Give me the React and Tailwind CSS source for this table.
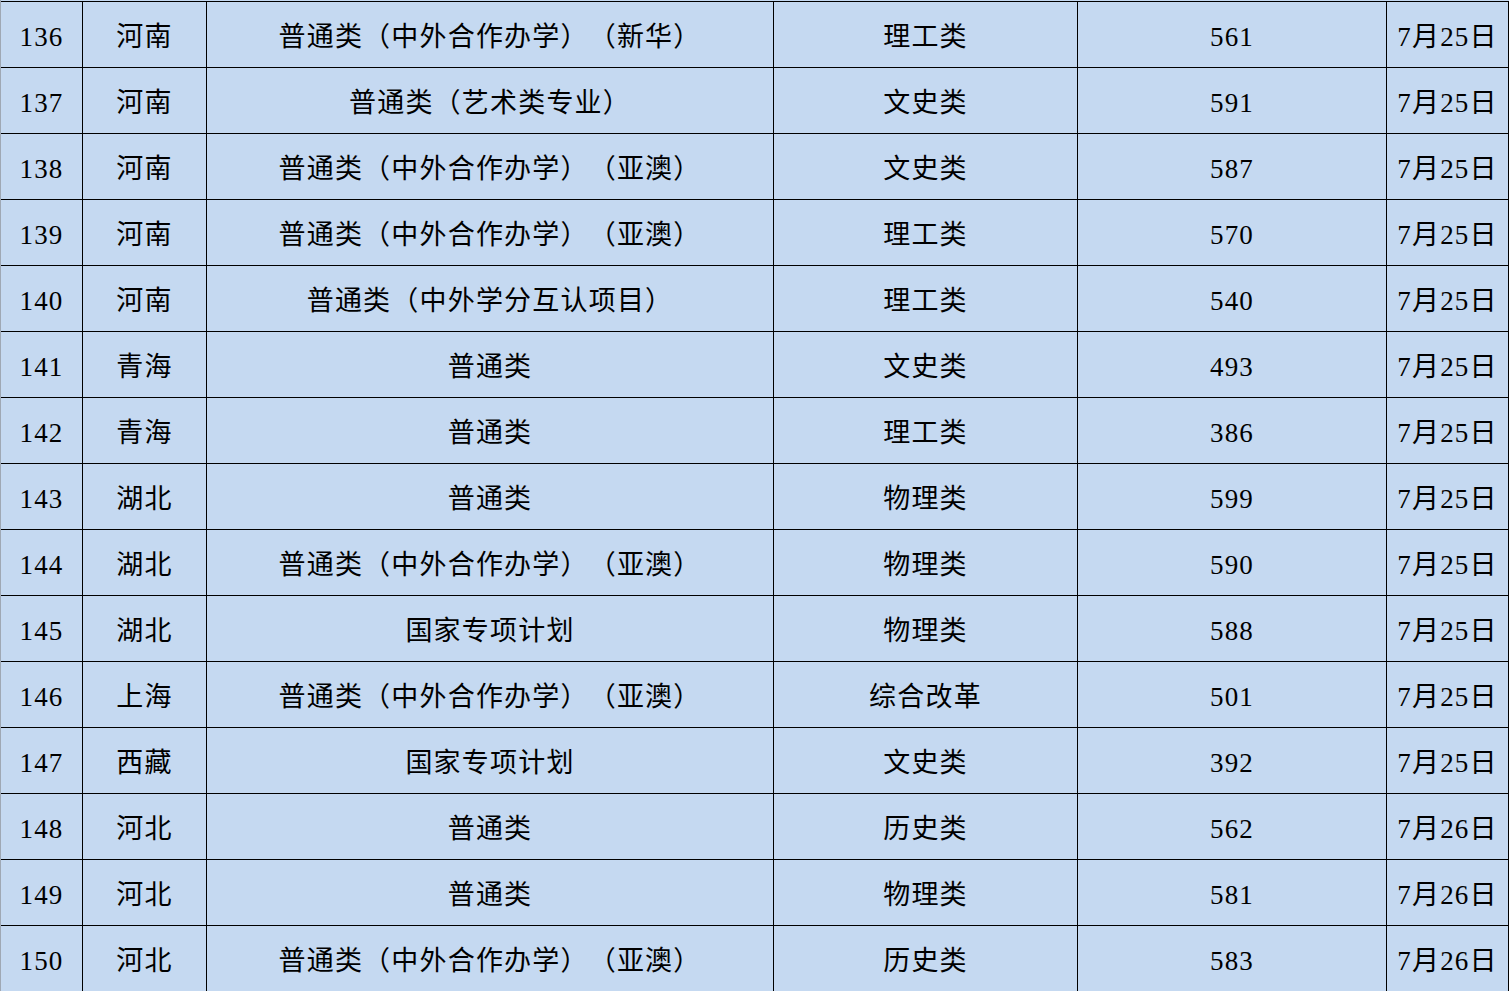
const rows = [
  ["136", "河南", "普通类（中外合作办学）（新华）", "理工类", "561", "7月25日"],
  ["137", "河南", "普通类（艺术类专业）", "文史类", "591", "7月25日"],
  ["138", "河南", "普通类（中外合作办学）（亚澳）", "文史类", "587", "7月25日"],
  ["139", "河南", "普通类（中外合作办学）（亚澳）", "理工类", "570", "7月25日"],
  ["140", "河南", "普通类（中外学分互认项目）", "理工类", "540", "7月25日"],
  ["141", "青海", "普通类", "文史类", "493", "7月25日"],
  ["142", "青海", "普通类", "理工类", "386", "7月25日"],
  ["143", "湖北", "普通类", "物理类", "599", "7月25日"],
  ["144", "湖北", "普通类（中外合作办学）（亚澳）", "物理类", "590", "7月25日"],
  ["145", "湖北", "国家专项计划", "物理类", "588", "7月25日"],
  ["146", "上海", "普通类（中外合作办学）（亚澳）", "综合改革", "501", "7月25日"],
  ["147", "西藏", "国家专项计划", "文史类", "392", "7月25日"],
  ["148", "河北", "普通类", "历史类", "562", "7月26日"],
  ["149", "河北", "普通类", "物理类", "581", "7月26日"],
  ["150", "河北", "普通类（中外合作办学）（亚澳）", "历史类", "583", "7月26日"],
];

// column widths incl. the 1px right border
const widths = ["w-[82px]", "w-[124px]", "w-[567px]", "w-[304px]", "w-[309px]", "w-[122px]"];

export default function App() {
  return (
    <div className="w-[1510px] h-[991px] overflow-hidden bg-white">
      <div
        className="w-[1509px] h-[991px] pt-px bg-[#c5d9f1] border-l border-l-[#9fa8b4] text-black text-[27px] leading-none tracking-[1.2px] [text-spacing-trim:space-all]"
        style={{ fontFamily: '"Liberation Serif", "Noto Sans CJK SC", serif' }}
      >
        {rows.map((row) => (
          <div key={row[0]} className="flex h-[66px] border-t border-black">
            {row.map((cell, i) => (
              <div
                key={i}
                className={`${widths[i]} shrink-0 flex items-center justify-center pt-[6px] border-r border-black whitespace-nowrap`}
              >
                {cell}
              </div>
            ))}
          </div>
        ))}
      </div>
    </div>
  );
}
